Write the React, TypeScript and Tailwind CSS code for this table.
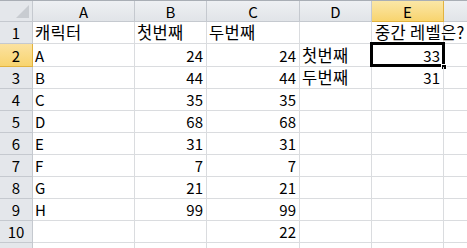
const cols = ["A", "B", "C", "D", "E"];
const widths = "grid-cols-[33px_102px_72px_93px_72px_72px_1fr]";

type Cell = { v: string; right?: boolean };

const rows: Cell[][] = [
  [{ v: "캐릭터" }, { v: "첫번째" }, { v: "두번째" }, { v: "" }, { v: "중간 레벨은?" }],
  [{ v: "A" }, { v: "24", right: true }, { v: "24", right: true }, { v: "첫번째" }, { v: "33", right: true }],
  [{ v: "B" }, { v: "44", right: true }, { v: "44", right: true }, { v: "두번째" }, { v: "31", right: true }],
  [{ v: "C" }, { v: "35", right: true }, { v: "35", right: true }, { v: "" }, { v: "" }],
  [{ v: "D" }, { v: "68", right: true }, { v: "68", right: true }, { v: "" }, { v: "" }],
  [{ v: "E" }, { v: "31", right: true }, { v: "31", right: true }, { v: "" }, { v: "" }],
  [{ v: "F" }, { v: "7", right: true }, { v: "7", right: true }, { v: "" }, { v: "" }],
  [{ v: "G" }, { v: "21", right: true }, { v: "21", right: true }, { v: "" }, { v: "" }],
  [{ v: "H" }, { v: "99", right: true }, { v: "99", right: true }, { v: "" }, { v: "" }],
  [{ v: "" }, { v: "" }, { v: "22", right: true }, { v: "" }, { v: "" }],
  [{ v: "" }, { v: "" }, { v: "" }, { v: "" }, { v: "" }],
];

const isKorean = (s: string) => /[가-힣]/.test(s);

export default function App() {
  return (
    <div
      className="w-[467px] h-[248px] overflow-hidden bg-white text-[15px] text-black"
      style={{ fontFamily: '"Noto Sans CJK KR", "Open Sans", sans-serif' }}
    >
      {/* column headers */}
      <div className={`grid ${widths} h-[22px] border-t border-[#a9aeb5]`}>
        <div className="relative border-r border-b border-[#c5c9cf] bg-[#e4e7eb]">
          <div className="absolute right-[3px] bottom-[3px] w-0 h-0 border-l-[13px] border-l-transparent border-b-[13px] border-b-[#c8ccd1]" />
        </div>
        {cols.map((c) => (
          <div
            key={c}
            className={`flex items-center justify-center border-r border-b leading-none ${
              c === "E"
                ? "bg-gradient-to-b from-[#fbe7a6] to-[#f8d46e] border-[#e2b33f]"
                : "bg-gradient-to-b from-[#eef0f3] to-[#e1e4e8] border-[#c5c9cf]"
            }`}
          >
            {c}
          </div>
        ))}
        <div className="border-b border-[#c5c9cf] bg-gradient-to-b from-[#eef0f3] to-[#e1e4e8]" />
      </div>

      {rows.map((row, i) => (
        <div key={i} className={`grid ${widths} ${i === 1 ? "h-[23px]" : "h-[22px]"}`}>
          <div
            className={`flex items-center justify-center border-r border-b leading-none ${
              i === 1
                ? "bg-gradient-to-b from-[#fbe2a0] to-[#f8d46e] border-[#e2b33f]"
                : "bg-[#e4e7eb] border-[#c5c9cf]"
            }`}
          >
            {i < 10 ? i + 1 : ""}
          </div>
          {row.map((cell, j) => (
            <div
              key={j}
              className={`relative flex items-center border-r border-b border-[#dadcdf] whitespace-nowrap leading-none ${
                cell.right ? "justify-end pr-[3px]" : "pl-[2px]"
              }`}
            >
              {cell.v && (
                <span
                  className={`${isKorean(cell.v) ? "text-[16.5px] tracking-[0.3px]" : ""} ${
                    j === 4 && i === 0 ? "absolute left-[3px]" : ""
                  }`}
                >
                  {cell.v}
                </span>
              )}
              {i === 1 && j === 4 && (
                <>
                  <div className="absolute -left-[2px] -top-[2px] -right-[2px] -bottom-[1px] border-[3px] border-black pointer-events-none" />
                  <div className="absolute -right-[4px] -bottom-[4px] w-[6px] h-[6px] bg-black border border-white" />
                </>
              )}
            </div>
          ))}
          <div className="border-b border-[#dadcdf]" />
        </div>
      ))}
    </div>
  );
}
